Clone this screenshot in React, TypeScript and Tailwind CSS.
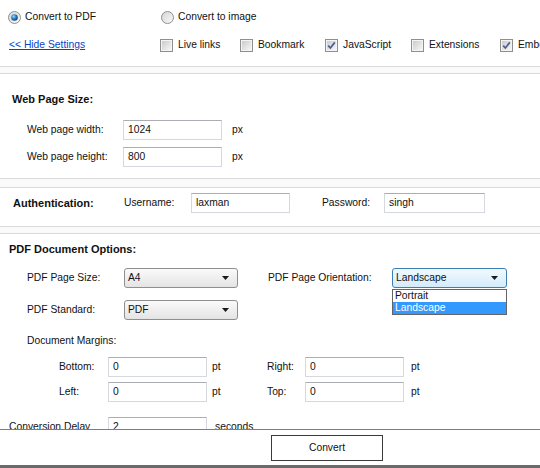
import * as React from "react";

function Radio({ checked }: { checked?: boolean }) {
  return (
    <svg width="13" height="13" viewBox="0 0 13 13" className="shrink-0">
      <defs>
        <linearGradient id="radio-bg" x1="0" y1="0" x2="1" y2="1">
          <stop offset="0" stopColor="#d4d4d4" />
          <stop offset="1" stopColor="#fbfbfb" />
        </linearGradient>
        <radialGradient id="radio-dot" cx="0.38" cy="0.35" r="0.7">
          <stop offset="0" stopColor="#9ad8ff" />
          <stop offset="0.5" stopColor="#2b80c5" />
          <stop offset="1" stopColor="#0c3a63" />
        </radialGradient>
      </defs>
      <circle cx="6.5" cy="6.5" r="6" fill="url(#radio-bg)" stroke="#8e8f8f" />
      {checked && <circle cx="6.5" cy="6.5" r="3.3" fill="url(#radio-dot)" />}
    </svg>
  );
}

function Check({ checked }: { checked?: boolean }) {
  return (
    <svg width="13" height="13" viewBox="0 0 13 13" className="shrink-0">
      <defs>
        <linearGradient id="check-bg" x1="0" y1="0" x2="1" y2="1">
          <stop offset="0" stopColor="#cbcbcb" />
          <stop offset="1" stopColor="#f6f6f6" />
        </linearGradient>
      </defs>
      <rect x="0.5" y="0.5" width="12" height="12" fill="#f4f4f4" stroke="#8e8f8f" />
      <rect x="2" y="2" width="9" height="9" fill="url(#check-bg)" />
      {checked && (
        <path d="M3.2 6.6 L5.4 9 L9.8 3.4" fill="none" stroke="#4a5e92" strokeWidth="1.7" />
      )}
    </svg>
  );
}

function CheckItem({ label, checked, w }: { label: string; checked?: boolean; w: string }) {
  return (
    <div className={`flex shrink-0 items-center gap-[5px] ${w}`}>
      <Check checked={checked} />
      <span>{label}</span>
    </div>
  );
}

function TextBox({ value, w = "w-[99px]" }: { value: string; w?: string }) {
  return (
    <div
      className={`flex h-5 shrink-0 items-center border border-[#d5d9df] border-t-[#abadb3] bg-white pl-[4px] ${w}`}
    >
      {value}
    </div>
  );
}

function Arrow() {
  return (
    <svg width="7" height="4" viewBox="0 0 7 4" className="absolute right-[8px] top-[7px]">
      <path d="M0 0 H7 L3.5 4 Z" fill="#1a1a1a" />
    </svg>
  );
}

function Select({ value, focused }: { value: string; focused?: boolean }) {
  return (
    <div
      className={
        focused
          ? "relative flex h-5 w-[115px] shrink-0 items-center rounded-[3px] border border-[#3c7fb1] bg-gradient-to-b from-[#f1f9fe] to-[#d3ecfb] pl-[3px]"
          : "relative flex h-5 w-[114px] shrink-0 items-center rounded-[3px] border border-[#8e8f8f] bg-gradient-to-b from-[#fafafa] to-[#e4e4e4] pl-[3px]"
      }
    >
      {value}
      <Arrow />
    </div>
  );
}

export default function App() {
  return (
    <div className="flex h-[468px] w-[540px] flex-col overflow-hidden bg-white font-['Liberation_Sans',Arial,sans-serif] text-[10.3px] leading-4 text-[#111]">
      <div className="min-h-0 flex-1 overflow-hidden bg-[#fafafa]">
        {/* mode + options */}
        <div className="h-[67px] border-b border-[#dadada] bg-white pl-[8px] pt-[7px] whitespace-nowrap">
          <div className="flex h-5 items-center">
            <div className="flex w-[153px] items-center gap-[4px]">
              <Radio checked />
              <span>Convert to PDF</span>
            </div>
            <div className="flex items-center gap-[4px]">
              <Radio />
              <span>Convert to image</span>
            </div>
          </div>
          <div className="mt-2 flex h-5 items-center">
            <a className="w-[152px] shrink-0 pl-px text-[#0645c8] underline">&lt;&lt; Hide Settings</a>
            <CheckItem label="Live links" w="w-[80px]" />
            <CheckItem label="Bookmark" w="w-[85px]" />
            <CheckItem label="JavaScript" checked w="w-[86px]" />
            <CheckItem label="Extensions" w="w-[89px]" />
            <CheckItem label="Embed fonts" checked w="w-[90px]" />
          </div>
        </div>

        {/* web page size */}
        <div className="mt-[6px] border-y border-[#dadada] bg-white pb-[11px] pt-[17px]">
          <div className="pl-[12px] text-[11px] font-bold">Web Page Size:</div>
          <div className="mt-[13px] flex items-center pl-[27px]">
            <span className="w-[96px] shrink-0">Web page width:</span>
            <TextBox value="1024" />
            <span className="ml-[10px]">px</span>
          </div>
          <div className="mt-[7px] flex items-center pl-[27px]">
            <span className="w-[96px] shrink-0">Web page height:</span>
            <TextBox value="800" />
            <span className="ml-[10px]">px</span>
          </div>
        </div>

        {/* authentication */}
        <div className="mt-[8px] flex items-center border-y border-[#dadada] bg-white pb-[13px] pl-[13px] pt-[5px]">
          <span className="w-[111px] shrink-0 text-[11px] font-bold">Authentication:</span>
          <span className="w-[67px] shrink-0">Username:</span>
          <TextBox value="laxman" w="w-[99px]" />
          <span className="ml-[32px] w-[62px] shrink-0">Password:</span>
          <TextBox value="singh" w="w-[101px]" />
        </div>

        {/* pdf options */}
        <div className="mt-[6px] border-t border-[#dadada] bg-white pt-[7px] pb-[20px]">
          <div className="pl-[9px] text-[11px] font-bold">PDF Document Options:</div>
          <div className="mt-[11px] flex items-center pl-[27px]">
            <span className="w-[97px] shrink-0">PDF Page Size:</span>
            <Select value="A4" />
            <span className="ml-[30px] w-[124px] shrink-0">PDF Page Orientation:</span>
            <div className="relative">
              <Select value="Landscape" focused />
              <div className="absolute left-0 top-[21px] z-10 w-[115px] border border-[#646464] bg-white">
                <div className="h-[12px] pl-[2px] leading-[12px]">Portrait</div>
                <div className="h-[12px] bg-[#3399ff] pl-[2px] leading-[12px] text-white">Landscape</div>
              </div>
            </div>
          </div>
          <div className="mt-[12px] flex items-center pl-[27px]">
            <span className="w-[97px] shrink-0">PDF Standard:</span>
            <Select value="PDF" />
          </div>
          <div className="mt-[13px] pl-[27px]">Document Margins:</div>
          <div className="mt-[8px] flex items-center pl-[59px]">
            <span className="w-[49px] shrink-0">Bottom:</span>
            <TextBox value="0" />
            <span className="ml-[5px] w-[55px] shrink-0">pt</span>
            <span className="w-[38px] shrink-0">Right:</span>
            <TextBox value="0" />
            <span className="ml-[7px]">pt</span>
          </div>
          <div className="mt-[5px] flex items-center pl-[59px]">
            <span className="w-[49px] shrink-0">Left:</span>
            <TextBox value="0" />
            <span className="ml-[5px] w-[55px] shrink-0">pt</span>
            <span className="w-[38px] shrink-0">Top:</span>
            <TextBox value="0" />
            <span className="ml-[7px]">pt</span>
          </div>
          <div className="mt-[15px] flex items-center pl-[9px]">
            <span className="w-[99px] shrink-0">Conversion Delay</span>
            <TextBox value="2" />
            <span className="ml-[8px]">seconds</span>
          </div>
        </div>
      </div>

      {/* bottom bar */}
      <div className="h-[39px] shrink-0 border-t border-b-[3px] border-t-[#7d7d7d] border-b-[#6a6a6a] bg-white pl-[271px] pt-[5px]">
        <button
          type="button"
          className="flex h-[26px] w-[112px] items-center justify-center border border-[#3a3a3a] bg-white"
        >
          Convert
        </button>
      </div>
    </div>
  );
}
